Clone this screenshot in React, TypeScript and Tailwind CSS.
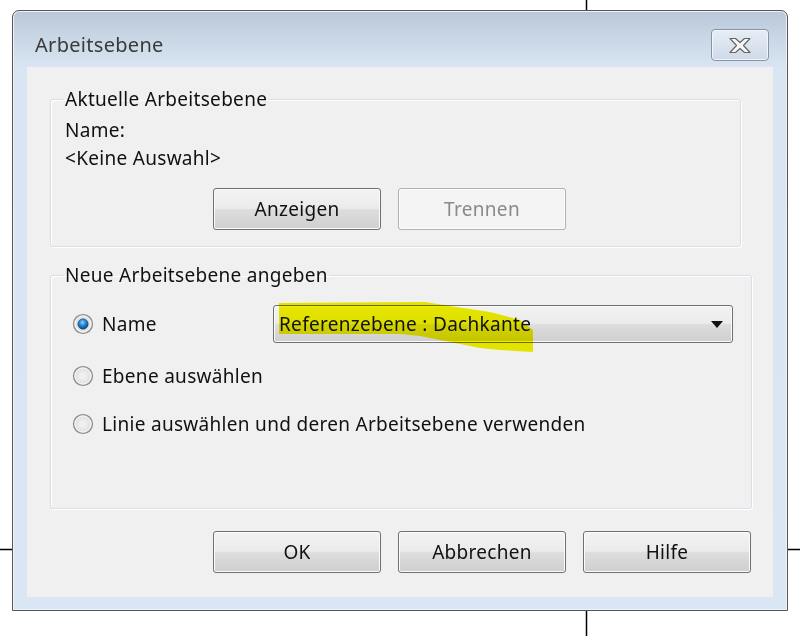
import type { ReactNode } from 'react'

const FONT = { fontFamily: '"Noto Sans", "Open Sans", sans-serif' }

function Radio({ checked }: { checked?: boolean }) {
  return (
    <svg width="22" height="22" viewBox="0 0 22 22" className="shrink-0">
      <defs>
        <radialGradient id="rg-off" cx="50%" cy="50%" r="50%">
          <stop offset="0%" stopColor="#f4f4f4" />
          <stop offset="70%" stopColor="#e4e4e4" />
          <stop offset="100%" stopColor="#cfcfcf" />
        </radialGradient>
        <radialGradient id="rg-dot" cx="45%" cy="35%" r="60%">
          <stop offset="0%" stopColor="#8fd3ff" />
          <stop offset="45%" stopColor="#2e8fd6" />
          <stop offset="100%" stopColor="#0c4d86" />
        </radialGradient>
      </defs>
      <circle cx="11" cy="11" r="9.5" fill="url(#rg-off)" stroke="#8a8b8b" strokeWidth="1.2" />
      <circle cx="11" cy="11" r="8" fill="none" stroke="#ffffff" strokeWidth="1" opacity="0.8" />
      {checked && <circle cx="11" cy="11" r="5.2" fill="url(#rg-dot)" stroke="#1b4f7d" strokeWidth="0.6" />}
    </svg>
  )
}

function Btn({ children, disabled }: { children: ReactNode; disabled?: boolean }) {
  return (
    <div
      className={
        disabled
          ? 'w-[168px] h-[42px] flex items-center justify-center rounded-[3px] border border-[#adb2b5] bg-[#f4f4f4] text-[#8a8a8a] shadow-[inset_0_0_0_1px_#fcfcfc]'
          : 'w-[168px] h-[42px] flex items-center justify-center rounded-[3px] border border-[#707070] text-[#111] bg-[linear-gradient(to_bottom,#f3f3f3_0%,#ebebeb_48%,#dddddd_52%,#cfcfcf_100%)] shadow-[inset_0_0_0_1px_#fbfbfb]'
      }
    >
      {children}
    </div>
  )
}

function Group({ title, className, children }: { title: string; className: string; children: ReactNode }) {
  return (
    <fieldset className={`border border-[#d5dfe5] rounded-[3px] shadow-[inset_1px_1px_0_#ffffff,1px_1px_0_#ffffff] ${className}`}>
      <legend className="ml-[13px] px-[1px] h-[24px] leading-[24px] text-[#111]">{title}</legend>
      {children}
    </fieldset>
  )
}

export default function App() {
  return (
    <div className="relative w-[800px] h-[636px] bg-white overflow-hidden text-[19px] tracking-[0.3px]" style={FONT}>
      {/* crosshair lines behind the dialog */}
      <svg className="absolute inset-0" width="800" height="636">
        <line x1="586.5" y1="0" x2="586.5" y2="636" stroke="#000" strokeWidth="1.5" />
        <line x1="0" y1="549.5" x2="800" y2="549.5" stroke="#000" strokeWidth="1.5" />
      </svg>

      <div className="relative pt-[10px] pl-[12px]">
        <div className="w-[776px] h-[601px] flex flex-col border border-[#555] rounded-t-[7px] bg-[linear-gradient(to_bottom,#b9c8d9_0px,#d9e5f2_56px,#dae6f3_100%)] shadow-[inset_0_0_0_1px_#eef4fa]">
          {/* title bar */}
          <div className="h-[56px] flex items-start justify-between pl-[22px] pr-[18px]">
            <span className="text-[20px] leading-[28px] mt-[20px] text-[#3a3a3a]">Arbeitsebene</span>
            <div className="w-[58px] h-[32px] mt-[18px] rounded-[4px] border border-[#8693a6] bg-[linear-gradient(to_bottom,#e6edf5,#cfdae8)] shadow-[inset_0_0_0_1px_#f2f6fb] flex items-center justify-center">
              <svg width="24" height="17" viewBox="0 0 24 17">
                <path
                  d="M2 1.5h5.5l4.5 4 4.5-4H22l-6.5 7 6.5 7h-5.5l-4.5-4-4.5 4H2l6.5-7z"
                  fill="#f7f7f7"
                  stroke="#666"
                  strokeWidth="1.2"
                  strokeLinejoin="round"
                />
              </svg>
            </div>
          </div>

          {/* client area */}
          <div className="mx-[14px] mb-[13px] flex-1 bg-[#f0f0f0] pl-[23px] pt-[20px]">
            <Group title="Aktuelle Arbeitsebene" className="w-[691px] h-[160px]">
              <div className="pl-[14px] pt-[5px] text-[#111]">
                <div className="h-[28px] leading-[28px]">Name:</div>
                <div className="h-[28px] leading-[28px]">&lt;Keine Auswahl&gt;</div>
                <div className="flex gap-[17px] ml-[148px] mt-[16px]">
                  <Btn>Anzeigen</Btn>
                  <Btn disabled>Trennen</Btn>
                </div>
              </div>
            </Group>

            <Group title="Neue Arbeitsebene angeben" className="w-[702px] h-[246px] mt-[16px]">
              <div className="pl-[21px] pt-[18px] text-[#111]">
                <div className="h-[38px] flex items-center">
                  <Radio checked />
                  <span className="ml-[8px] w-[171px]">Name</span>
                  <div className="relative w-[460px] h-[38px] rounded-[3px] border border-[#707070] bg-[linear-gradient(to_bottom,#f3f3f3_0%,#ebebeb_48%,#dddddd_52%,#cfcfcf_100%)] shadow-[inset_0_0_0_1px_#fbfbfb] flex items-center justify-between pl-[5px] pr-[9px]">
                    {/* highlighter stroke */}
                    <svg className="absolute left-[4px] top-[-4px] mix-blend-multiply" width="262" height="52" viewBox="0 0 262 52">
                      <path
                        d="M1 1 L147 0 L172 4 L212 10 L242 18 L255 28 L255 50 L222 48 L202 46 L172 40 L142 34 L122 32 L1 32 Z"
                        fill="#f2f200"
                      />
                    </svg>
                    <span className="relative">Referenzebene : Dachkante</span>
                    <svg width="12" height="7" viewBox="0 0 12 7">
                      <path d="M0 0h12L6 7z" fill="#111" />
                    </svg>
                  </div>
                </div>
                <div className="h-[28px] mt-[19px] flex items-center">
                  <Radio />
                  <span className="ml-[8px]">Ebene auswählen</span>
                </div>
                <div className="h-[28px] mt-[20px] flex items-center">
                  <Radio />
                  <span className="ml-[8px]">Linie auswählen und deren Arbeitsebene verwenden</span>
                </div>
              </div>
            </Group>

            <div className="flex gap-[17px] ml-[163px] mt-[22px]">
              <Btn>OK</Btn>
              <Btn>Abbrechen</Btn>
              <Btn>Hilfe</Btn>
            </div>
          </div>
        </div>
      </div>
    </div>
  )
}
